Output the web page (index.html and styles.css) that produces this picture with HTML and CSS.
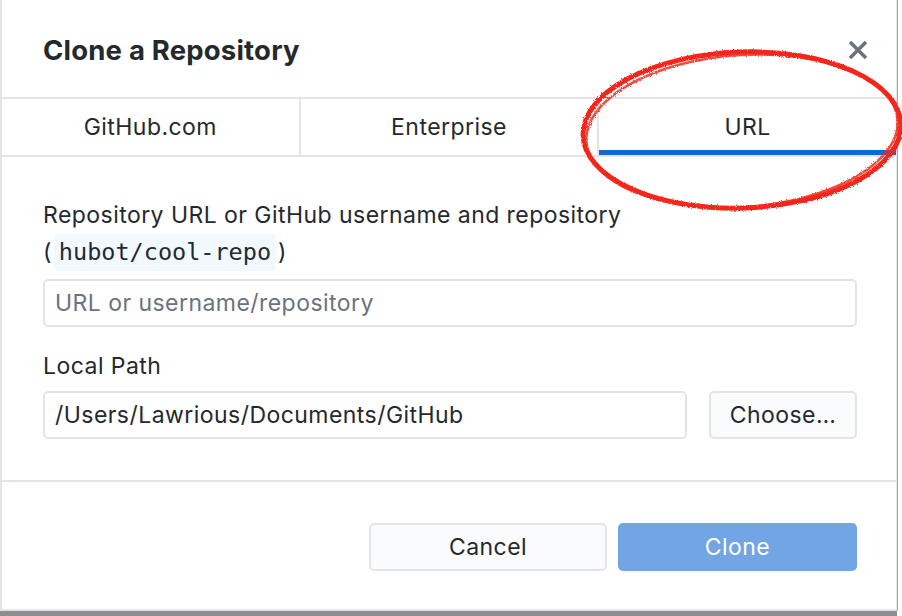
FILE: index.html
```html
<!DOCTYPE html>
<html lang="en">
<head>
<meta charset="utf-8">
<title>Clone a Repository</title>
<link rel="stylesheet" href="styles.css">
</head>
<body>
<div class="dialog">
  <header class="dialog-header">
    <h1 class="title">Clone a Repository</h1>
    <button class="close" aria-label="Close">
      <svg width="20" height="20" viewBox="0 0 20 20"><path d="M2 2 L18 18 M18 2 L2 18" stroke="#6a737d" stroke-width="3.6" fill="none"/></svg>
    </button>
  </header>
  <nav class="tabs">
    <div class="tab">GitHub.com</div>
    <div class="tab">Enterprise</div>
    <div class="tab selected">URL</div>
  </nav>
  <section class="content">
    <div class="field-label">Repository URL or GitHub username and repository<br>(<code class="code">hubot/cool-repo</code>)</div>
    <input class="text-input url-input" type="text" placeholder="URL or username/repository">
    <div class="field-label local-label">Local Path</div>
    <div class="path-row">
      <input class="text-input path-input" type="text" value="/Users/Lawrious/Documents/GitHub">
      <button class="btn choose">Choose…</button>
    </div>
  </section>
  <footer class="dialog-footer">
    <button class="btn cancel">Cancel</button>
    <button class="btn primary">Clone</button>
  </footer>
  <svg class="annotation" width="902" height="616" viewBox="0 0 902 616">
    <defs>
      <filter id="rough" x="-5%" y="-5%" width="110%" height="110%">
        <feTurbulence type="fractalNoise" baseFrequency="0.8" numOctaves="2" result="noise"/>
        <feDisplacementMap in="SourceGraphic" in2="noise" scale="3"/>
      </filter>
    </defs>
    <g filter="url(#rough)" fill="none" stroke="#f4281c">
      <ellipse cx="742" cy="130" rx="159" ry="78" transform="rotate(-2 742 130)" stroke-width="5"/>
      <ellipse cx="742" cy="131" rx="156" ry="76" transform="rotate(-4 742 131)" stroke-width="2.5" opacity="0.85"/>
    </g>
  </svg>
</div>
</body>
</html>
```

FILE: styles.css
```css
* {
  box-sizing: border-box;
}

html, body {
  margin: 0;
  padding: 0;
  background: #ffffff;
}

body {
  font-family: Inter, "Noto Sans", "Liberation Sans", sans-serif;
  color: #24292e;
  width: 902px;
  height: 616px;
  overflow: hidden;
}

.dialog {
  position: relative;
  width: 897px;
  height: 611px;
  background: #ffffff;
  border-left: 2px solid #e1e4e8;
  border-right: 1px solid #e1e4e8;
  border-bottom: 2px solid #e1e4e8;
  box-shadow: 1px 0 0 #a9a9a9, 0 5px 0 #8e8e8e;
  display: flex;
  flex-direction: column;
}

.dialog-header {
  height: 97px;
  display: flex;
  align-items: center;
  justify-content: space-between;
  padding: 3px 28px 0 41px;
}

.title {
  margin: 0;
  font-size: 27.5px;
  font-weight: 700;
  letter-spacing: 0.2px;
}

.close {
  border: 0;
  background: none;
  padding: 0;
  width: 20px;
  height: 20px;
  display: flex;
}

.tabs {
  display: flex;
  border-top: 2px solid #e1e4e8;
  border-bottom: 2px solid #e1e4e8;
}

.tab {
  flex: 1;
  height: 56px;
  display: flex;
  align-items: center;
  justify-content: center;
  font-size: 23px;
  letter-spacing: 0.45px;
  border-right: 2px solid #e1e4e8;
}

.tab:last-child {
  border-right: 0;
}

.tab.selected {
  box-shadow: inset 0 -5px 0 #1366d6;
}

.content {
  height: 323px;
  padding: 40px 39px 0 41px;
}

.field-label {
  font-size: 23px;
  letter-spacing: 0.45px;
  line-height: 37px;
}

.code {
  display: inline-block;
  vertical-align: top;
  font-family: "DejaVu Sans Mono", "Liberation Mono", monospace;
  font-size: 23.5px;
  line-height: 37px;
  letter-spacing: 0;
  background: #f1f8ff;
  padding: 0 5px;
  margin: 0 2px;
  border-radius: 4px;
}

.text-input {
  display: block;
  height: 48px;
  border: 2px solid #e1e4e8;
  border-radius: 5px;
  padding: 0 10px;
  font-family: inherit;
  font-size: 23px;
  letter-spacing: 0.45px;
  color: #24292e;
  background: #ffffff;
  outline: none;
}

.text-input::placeholder {
  color: #6a737d;
}

.url-input {
  width: 100%;
  margin-top: 8px;
}

.local-label {
  margin-top: 21px;
}

.path-row {
  display: flex;
  gap: 22px;
  margin-top: 6px;
}

.path-input {
  flex: 1;
}

.btn {
  height: 48px;
  border: 2px solid #e1e4e8;
  border-radius: 5px;
  background: #fafbfc;
  font-family: inherit;
  font-size: 23px;
  letter-spacing: 0.45px;
  color: #24292e;
  padding: 0;
}

.choose {
  width: 148px;
}

.dialog-footer {
  flex: 1;
  border-top: 2px solid #e1e4e8;
  display: flex;
  justify-content: flex-end;
  gap: 11px;
  padding: 41px 39px 0 0;
}

.cancel {
  width: 238px;
}

.primary {
  width: 239px;
  background: #71a5e4;
  border-color: #71a5e4;
  color: #ffffff;
}

.annotation {
  position: absolute;
  left: -2px;
  top: 0;
  pointer-events: none;
  overflow: visible;
}
```
